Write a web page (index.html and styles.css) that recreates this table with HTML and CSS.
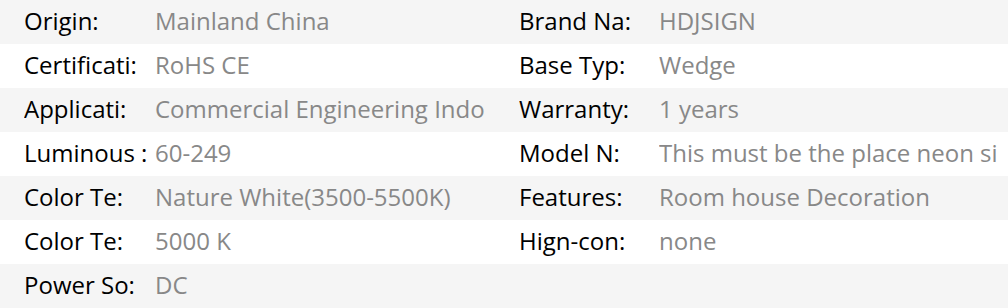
FILE: index.html
```html
<!DOCTYPE html>
<html lang="en">
<head>
    <meta charset="UTF-8">
    <meta name="viewport" content="width=device-width, initial-scale=1.0">
    <title>Product Attributes</title>
    <link rel="stylesheet" href="styles.css">
</head>
<body>
    <div class="specs">
        <div class="row">
            <span class="key">Origin:</span>
            <span class="val">Mainland China</span>
            <span class="key">Brand Na:</span>
            <span class="val">HDJSIGN</span>
        </div>
        <div class="row">
            <span class="key">Certificati:</span>
            <span class="val">RoHS CE</span>
            <span class="key">Base Typ:</span>
            <span class="val">Wedge</span>
        </div>
        <div class="row">
            <span class="key">Applicati:</span>
            <span class="val">Commercial Engineering Indo</span>
            <span class="key">Warranty:</span>
            <span class="val">1 years</span>
        </div>
        <div class="row">
            <span class="key">Luminous :</span>
            <span class="val">60-249</span>
            <span class="key">Model N:</span>
            <span class="val">This must be the place neon si</span>
        </div>
        <div class="row">
            <span class="key">Color Te:</span>
            <span class="val">Nature White(3500-5500K)</span>
            <span class="key">Features:</span>
            <span class="val">Room house Decoration</span>
        </div>
        <div class="row">
            <span class="key">Color Te:</span>
            <span class="val">5000 K</span>
            <span class="key">Hign-con:</span>
            <span class="val">none</span>
        </div>
        <div class="row">
            <span class="key">Power So:</span>
            <span class="val">DC</span>
        </div>
    </div>
</body>
</html>
```

FILE: styles.css
```css
body {
    margin: 0;
    padding: 0;
    background: #ffffff;
    font-family: 'Open Sans', 'Noto Sans', sans-serif;
    overflow: hidden;
}

.specs {
    width: 1008px;
}

.row {
    display: grid;
    grid-template-columns: 131px 364px 140px 1fr;
    height: 44px;
    box-sizing: border-box;
    align-items: center;
    padding: 0 0 3px 24px;
    font-size: 24px;
    white-space: nowrap;
}

.row:nth-child(odd) {
    background: #f5f5f5;
}

.key {
    color: #000;
    overflow: hidden;
}

.val {
    color: #888;
    overflow: hidden;
}
```
